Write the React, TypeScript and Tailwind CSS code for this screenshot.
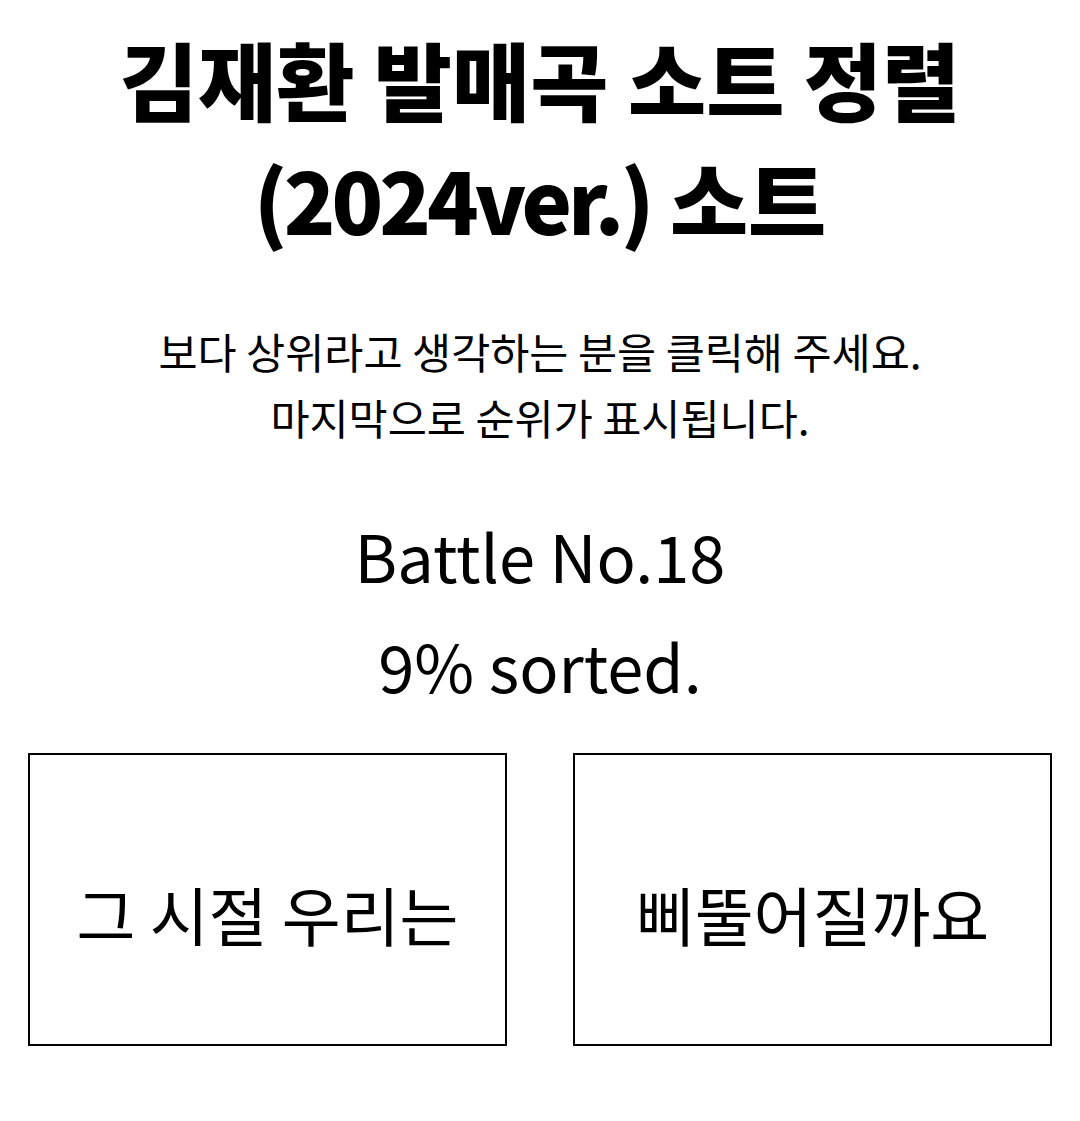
export default function App() {
  const font = { fontFamily: '"Noto Sans CJK KR", "Noto Sans", sans-serif' };
  return (
    <div className="min-h-screen bg-white text-black" style={font}>
      <div className="mx-auto flex w-full flex-col items-center px-7 pt-[18px] text-center">
        <h1 className="text-[85px] font-black leading-[120px]">
          김재환 발매곡 소트 정렬
          <br />
          <span className="tracking-[-4px]">(2024ver.)</span> 소트
        </h1>
        <p className="mt-[60px] text-[42.5px] leading-[66px]">
          보다 상위라고 생각하는 분을 클릭해 주세요.
          <br />
          마지막으로 순위가 표시됩니다.
        </p>
        <div className="mt-[50px] text-[65px] leading-[110px]">Battle No.18</div>
        <div className="text-[65px] leading-[110px]">9% sorted.</div>
        <div className="mt-[33px] grid w-full grid-cols-2 gap-[66px]">
          {["그 시절 우리는", "삐뚤어질까요"].map(t => (
            <button
              key={t}
              className="flex h-[293px] items-center justify-center border-2 border-black pt-[26px] text-[64px]"
            >
              {t}
            </button>
          ))}
        </div>
      </div>
    </div>
  );
}
